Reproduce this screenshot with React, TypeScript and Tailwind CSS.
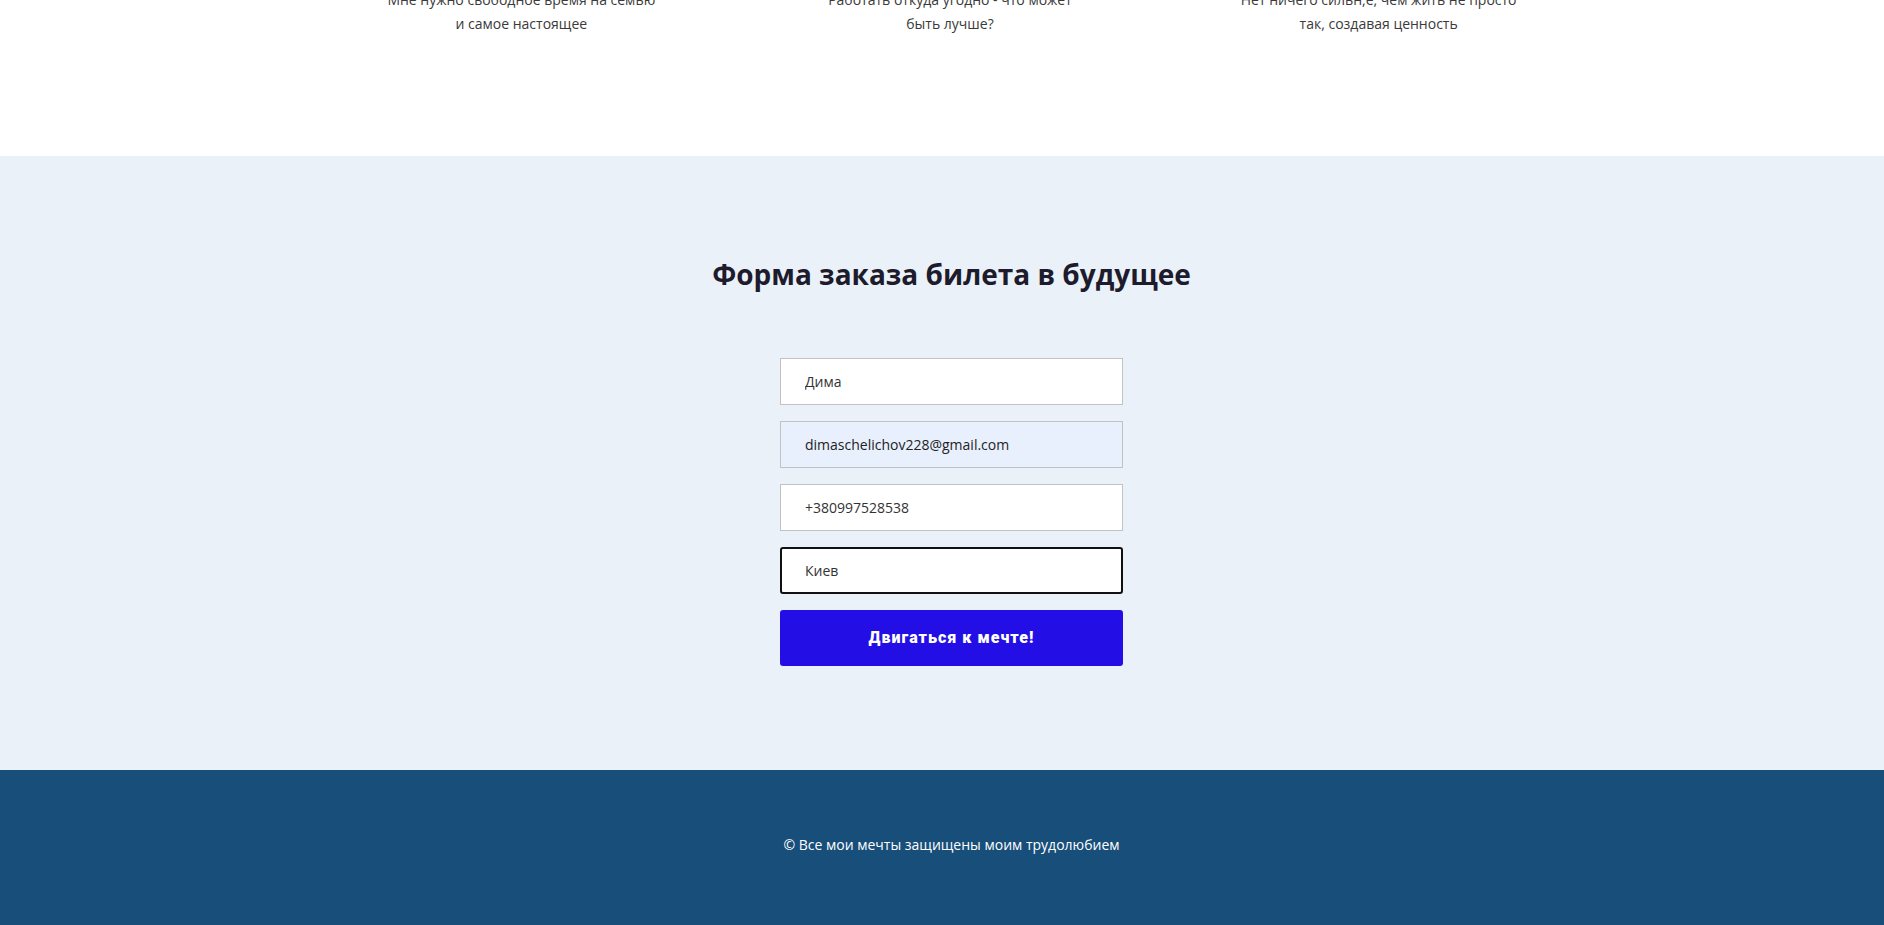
export default function App() {
  const reasons = [
    ["Мне нужно свободное время на семью", "и самое настоящее"],
    ["Работать откуда угодно - что может", "быть лучше?"],
    ["Нет ничего сильн,е, чем жить не просто", "так, создавая ценность"],
  ];

  return (
    <div className="min-h-[925px] bg-white font-['Open_Sans','Noto_Sans',sans-serif] text-[#333]">
      {/* Reasons (tail) */}
      <section className="h-[156px] overflow-hidden">
        <div className="mx-auto -mt-[12px] grid w-[1302px] grid-cols-3 pl-[16px]">
          {reasons.map((r, i) => (
            <p key={i} className="text-center text-[14px] leading-[24px] text-[#3a3a3a]">
              {r[0]}
              <br />
              {r[1]}
            </p>
          ))}
        </div>
      </section>

      {/* Order form */}
      <section className="flex h-[614px] flex-col items-center bg-[#eaf1f8] pt-[98px] pl-[19px]">
        <h2 className="text-[28px] font-bold leading-[40px] text-[#1d1b2c]">
          Форма заказа билета в будущее
        </h2>
        <form className="mt-[64px] flex w-[343px] flex-col gap-[16px]" onSubmit={(e) => e.preventDefault()}>
          <input
            defaultValue="Дима"
            className="h-[47px] border border-[#c2c2c2] bg-white px-[24px] text-[14px] text-[#333] outline-none"
          />
          <input
            defaultValue="dimaschelichov228@gmail.com"
            className="h-[47px] border border-[#c2c2c2] bg-[#e8f0fe] px-[24px] text-[14px] text-[#222] outline-none"
          />
          <input
            defaultValue="+380997528538"
            className="h-[47px] border border-[#c2c2c2] bg-white px-[24px] text-[14px] text-[#333] outline-none"
          />
          <input
            defaultValue="Киев"
            className="h-[47px] rounded-[3px] border-2 border-[#111] bg-white px-[23px] text-[14px] text-[#333] outline-none"
          />
          <button className="h-[56px] rounded-[3px] bg-[#230fe6] font-['Roboto',sans-serif] text-[16px] font-black tracking-[1px] text-white">
            Двигаться к мечте!
          </button>
        </form>
      </section>

      {/* Footer */}
      <footer className="flex h-[155px] items-center justify-center bg-[#174e7a] pl-[19px]">
        <p className="-mt-[6px] text-[14px] text-white">© Все мои мечты защищены моим трудолюбием</p>
      </footer>
    </div>
  );
}
